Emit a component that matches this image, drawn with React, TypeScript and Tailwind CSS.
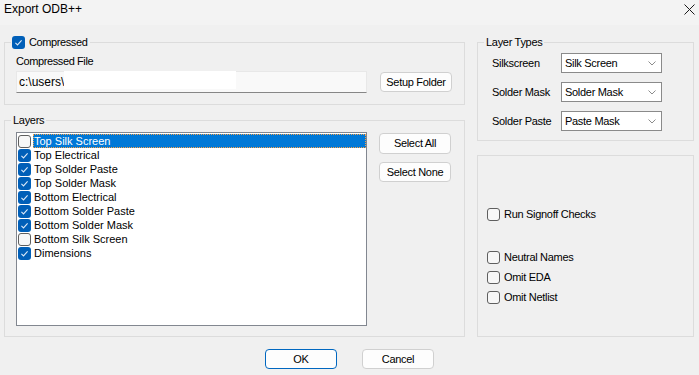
import React from 'react';

const narrow = "font-['Liberation_Sans',Arial,sans-serif] text-[11px] tracking-[-0.3px]";

const layers = [
  { name: 'Top Silk Screen', checked: false },
  { name: 'Top Electrical', checked: true },
  { name: 'Top Solder Paste', checked: true },
  { name: 'Top Solder Mask', checked: true },
  { name: 'Bottom Electrical', checked: true },
  { name: 'Bottom Solder Paste', checked: true },
  { name: 'Bottom Solder Mask', checked: true },
  { name: 'Bottom Silk Screen', checked: false },
  { name: 'Dimensions', checked: true },
];

function Check({ checked }: { checked?: boolean }) {
  if (checked) {
    return (
      <span className="flex h-[13px] w-[13px] shrink-0 items-center justify-center rounded-[3px] bg-[#005fb8]">
        <svg viewBox="0 0 13 13" className="h-[13px] w-[13px]">
          <path d="M3.4 6.9 L5.5 8.9 L9.6 4.4" fill="none" stroke="#dbe9f7" strokeWidth="1.1" />
        </svg>
      </span>
    );
  }
  return <span className="h-[13px] w-[13px] shrink-0 rounded-[3px] border border-[#5f5f5f] bg-[#f7f7f7]" />;
}

function Button({ label, primary, h = 'h-[20px]' }: { label: string; primary?: boolean; h?: string }) {
  return (
    <button
      className={
        (primary ? 'border-[#0067c0] ' : 'border-[#d0d0d0] ') +
        h +
        ' flex w-[72px] items-center justify-center rounded-[4px] border bg-[#fdfdfd] text-black ' +
        narrow
      }
    >
      {label}
    </button>
  );
}

function Select({ value }: { value: string }) {
  return (
    <div className="flex h-[20px] w-[101px] items-center justify-between border border-[#8a8a8a] bg-white pl-[3px] pr-[5px]">
      <span className={narrow}>{value}</span>
      <svg width="8" height="5" viewBox="0 0 8 5">
        <path d="M0.5 0.5 L4 4 L7.5 0.5" fill="none" stroke="#8c8c8c" strokeWidth="1" />
      </svg>
    </div>
  );
}

function OptionCheck({ label }: { label: string }) {
  return (
    <div className="flex h-[20px] items-center gap-[4px]">
      <Check />
      <span className={narrow}>{label}</span>
    </div>
  );
}

export default function App() {
  return (
    <div className="flex h-[375px] w-[699px] flex-col bg-[#f0f0f0] font-['Liberation_Sans',Arial,sans-serif] text-black">
      {/* title bar */}
      <div className="flex h-[25px] shrink-0 items-start justify-between bg-[#f3f3f3] pl-[4px] pr-[4px] pt-[2px]">
        <span className="text-[12px] leading-[14px]">Export ODB++</span>
        <svg width="11" height="11" viewBox="0 0 11 11" className="mt-[2px]">
          <path d="M0.5 0.5 L10.5 10.5 M10.5 0.5 L0.5 10.5" stroke="#1a1a1a" strokeWidth="1" />
        </svg>
      </div>

      <div className="flex gap-[12px] px-[4px] pt-[10px]">
        {/* left column */}
        <div className="flex w-[461px] flex-col">
          <fieldset className="h-[70px] border border-[#dcdcdc]">
            <legend className="ml-[6px] flex h-[14px] items-center gap-[4px] pl-[1px] pr-[3px]">
              <Check checked />
              <span className="text-[11px] tracking-[-0.4px]">Compressed</span>
            </legend>
            <div className="pl-[11px]">
              <div className="mt-[5px] text-[11px] leading-[14px] tracking-[-0.4px]">Compressed File</div>
              <div className="mt-[3px] flex items-center">
                <div className="flex h-[22px] w-[351px] items-center border border-b-[#868686] border-[#e8e8e8] bg-[#f9f9f9] pl-[2px]">
                  <span className="text-[12px]">c:\users\</span>
                  <span className="-mt-[4px] h-[18px] w-[172px] bg-white" />
                </div>
                <div className="ml-[13px]">
                  <Button label="Setup Folder" />
                </div>
              </div>
            </div>
          </fieldset>

          <fieldset className="mt-[8px] h-[224px] border border-[#dcdcdc]">
            <legend className={'ml-[6px] px-[2px] leading-[14px] ' + narrow}>Layers</legend>
            <div className="flex pl-[11px] pt-[5px]">
              <div className="h-[194px] w-[351px] border border-[#828790] bg-white pl-[1px] pt-[1px]">
                {layers.map((l, i) => (
                  <div key={l.name} className="flex h-[14px] items-center">
                    <Check checked={l.checked} />
                    <div
                      className={
                        i === 0
                          ? 'ml-[2px] flex h-[14px] flex-1 items-center border border-dotted border-[#f7a24a] bg-[#0078d7] text-[11px] text-white'
                          : 'ml-[2px] flex h-[14px] flex-1 items-center pl-[1px] text-[11px]'
                      }
                    >
                      {l.name}
                    </div>
                  </div>
                ))}
              </div>
              <div className="ml-[12px] flex flex-col gap-[8px] pt-[1px]">
                <Button label="Select All" h="h-[21px]" />
                <Button label="Select None" />
              </div>
            </div>
          </fieldset>
        </div>

        {/* right column */}
        <div className="flex w-[217px] flex-col">
          <fieldset className="h-[106px] border border-[#dcdcdc]">
            <legend className={'ml-[6px] px-[2px] leading-[14px] ' + narrow}>Layer Types</legend>
            <div className="mt-[4px] flex flex-col gap-[9px] pl-[14px]">
              <div className="flex items-center">
                <span className={'w-[69px] ' + narrow}>Silkscreen</span>
                <Select value="Silk Screen" />
              </div>
              <div className="flex items-center">
                <span className={'w-[69px] ' + narrow}>Solder Mask</span>
                <Select value="Solder Mask" />
              </div>
              <div className="flex items-center">
                <span className={'w-[69px] ' + narrow}>Solder Paste</span>
                <Select value="Paste Mask" />
              </div>
            </div>
          </fieldset>

          <div className="mt-[14px] h-[182px] border border-[#dcdcdc] pl-[9px] pt-[48px]">
            <OptionCheck label="Run Signoff Checks" />
            <div className="mt-[23px]">
              <OptionCheck label="Neutral Names" />
              <OptionCheck label="Omit EDA" />
              <OptionCheck label="Omit Netlist" />
            </div>
          </div>
        </div>
      </div>

      <div className="mt-[12px] flex justify-center gap-[25px]">
        <Button label="OK" primary />
        <Button label="Cancel" />
      </div>
    </div>
  );
}
